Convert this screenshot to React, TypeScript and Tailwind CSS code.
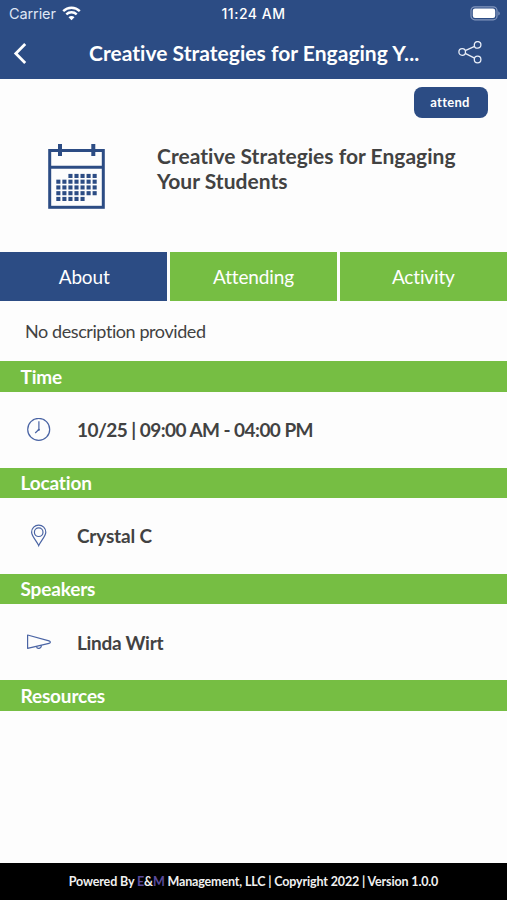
import React from "react";

const tabs = ["About", "Attending", "Activity"];

const calendarRows = [
  { from: 2, to: 6 },
  { from: 0, to: 6 },
  { from: 0, to: 6 },
  { from: 0, to: 6 },
  { from: 0, to: 4 },
];

const WifiIcon = () => (
  <svg width="19" height="15" viewBox="0 0 19 15" fill="none" stroke="white" strokeWidth="2.4">
    <path d="M1.2 5.2C5.8 .6 13.2 .6 17.8 5.2" />
    <path d="M4.3 8.4C7.2 5.6 11.8 5.6 14.7 8.4" />
    <path d="M9.5 14.2L6.5 11.2C8.1 9.6 10.9 9.6 12.5 11.2Z" fill="white" stroke="none" />
  </svg>
);

const BatteryIcon = () => (
  <svg width="31" height="15" viewBox="0 0 31 15" fill="none">
    <rect x="1" y=".8" width="26" height="13" rx="3.8" stroke="#8296bd" strokeWidth="1.2" />
    <rect x="2.8" y="2.6" width="22.4" height="9.4" rx="2.2" fill="white" />
    <path d="M28.3 5.2V9.6C30.3 8.6 30.3 6.2 28.3 5.2Z" fill="#8296bd" />
  </svg>
);

const ShareIcon = () => (
  <svg width="24" height="23" viewBox="0 0 24 23" fill="none" stroke="#e9eef8" strokeWidth="1.3">
    <circle cx="4.2" cy="11" r="3.3" />
    <circle cx="19.6" cy="3.9" r="3.3" />
    <circle cx="19.6" cy="18.5" r="3.3" />
    <path d="M7.2 9.6L16.6 5.3M7.2 12.4L16.6 17.1" />
  </svg>
);

const CalendarIcon = () => (
  <svg width="57" height="65" viewBox="0 0 57 65" fill="none" stroke="#2c4c84" strokeWidth="3">
    <rect x="1.7" y="6.5" width="53.6" height="56.8" />
    <path d="M1.7 23.2H55.3" />
    <path d="M12 0V12M45.3 0V12" strokeWidth="4" />
    {calendarRows.map((row, y) =>
      Array.from({ length: row.to - row.from + 1 }, (_, i) => (
        <rect
          key={y + "-" + i}
          x={8.3 + (row.from + i) * 6.05}
          y={29.9 + y * 5.75}
          width="4.1"
          height="4.1"
          fill="#2c4c84"
          stroke="none"
        />
      ))
    )}
  </svg>
);

const ClockIcon = () => (
  <svg width="24" height="24" viewBox="0 0 24 24" fill="none" stroke="#4a64a4" strokeWidth="1.2">
    <circle cx="11.7" cy="11.4" r="11" />
    <path d="M11.9 3.2V11.4L8.2 15" />
    <circle cx="11.8" cy="11.8" r="1.1" fill="#4a64a4" stroke="none" />
  </svg>
);

const PinIcon = () => (
  <svg width="24" height="24" viewBox="0 0 24 24" fill="none" stroke="#4a64a4" strokeWidth="1.2">
    <path d="M11.7 21.6C10.1 17.6 4.6 12.1 4.6 8.2A7.1 7.1 0 0 1 18.8 8.2C18.8 12.1 13.3 17.6 11.7 21.6Z" />
    <circle cx="11.7" cy="8.2" r="4.3" />
  </svg>
);

const SpeakerIcon = () => (
  <svg width="24" height="24" viewBox="0 0 24 24" fill="none" stroke="#4a64a4" strokeWidth="1.2" strokeLinejoin="round">
    <path d="M.6 5L22 10.9C23.8 11.4 23.8 12.9 22 13.3L.6 18.3Z" />
    <path d="M9.4 16.3C10.1 19.4 14.3 18.9 14.4 15.2" />
  </svg>
);

const sections = [
  { title: "Time", text: "10/25 | 09:00 AM - 04:00 PM", icon: <ClockIcon />, tracking: "tracking-[-0.55px]" },
  { title: "Location", text: "Crystal C", icon: <PinIcon />, tracking: "tracking-[-0.18px]" },
  { title: "Speakers", text: "Linda Wirt", icon: <SpeakerIcon />, tracking: "tracking-[-0.3px]" },
  { title: "Resources" },
];

const App = () => {
  return (
    <div className="flex h-[900px] w-[507px] flex-col overflow-hidden bg-[#fdfdfd] font-['Lato',sans-serif] text-[#424242] [font-variant-ligatures:none]">
      <header className="h-[79px] shrink-0 bg-[#2c4c84] text-white">
        <div className="grid h-[27px] grid-cols-3 items-center pl-[9px] pr-[6px] font-['Inter',sans-serif]">
          <div className="flex items-center gap-1.5 text-[14.5px] text-[#dfe6f4]">
            <span className="w-[47px] tracking-[-0.1px]">Carrier</span>
            <WifiIcon />
          </div>
          <p className="-ml-[3px] text-center text-[14px] font-medium tracking-[0.5px]">11:24 AM</p>
          <div className="flex justify-end">
            <BatteryIcon />
          </div>
        </div>
        <div className="flex h-[51px] items-center">
          <svg className="ml-[13px] shrink-0" width="14" height="22" viewBox="0 0 14 22" fill="none" stroke="white" strokeWidth="2.8">
            <path d="M12.2 2L2.8 11.5L12.2 21" />
          </svg>
          <h1 className="ml-[62px] w-[331px] whitespace-nowrap text-[21px] font-bold tracking-[0.03px]">Creative Strategies for Engaging Y...</h1>
          <div className="ml-[38px]">
            <ShareIcon />
          </div>
        </div>
      </header>

      <div className="h-[173px] shrink-0 pt-2">
        <div className="flex justify-end pr-[19px]">
          <button className="h-[31px] w-[74px] rounded-[8px] bg-[#2c4c84] pr-0.5 text-[13px] font-bold tracking-[0.25px] text-white">attend</button>
        </div>
        <div className="flex pl-12 pt-[26px]">
          <CalendarIcon />
          <h2 className="-mt-px ml-[52px] w-[320px] text-[21px] font-bold leading-[25px] tracking-[0.02px]">
            Creative Strategies for Engaging Your Students
          </h2>
        </div>
      </div>

      <nav className="mt-[0.4px] grid h-[48.6px] shrink-0 grid-cols-3 gap-[2.5px] text-[19px] tracking-[-0.15px] text-white">
        {tabs.map((tab) => (
          <button key={tab} className={tab === "About" ? "bg-[#2c4c84] pt-0.5 pl-px" : "bg-[#76be43] pt-0.5"}>
            {tab}
          </button>
        ))}
      </nav>
      <p className="flex h-[60.4px] shrink-0 items-center pl-[25px] pt-px text-[18px] tracking-[-0.42px]">No description provided</p>

      {sections.map((section) => (
        <section key={section.title} className="shrink-0">
          <h3 className="flex h-[30.3px] items-center bg-[#76be43] pl-[20.5px] pt-px text-[19px] font-bold tracking-[-0.16px] text-white">{section.title}</h3>
          {section.text && (
            <div className="flex h-[76px] items-center pl-[27px]">
              {section.icon}
              <p className={"ml-[26px] pt-px text-[19px] font-bold " + section.tracking}>{section.text}</p>
            </div>
          )}
        </section>
      ))}

      <footer className="mt-auto flex h-[37px] shrink-0 items-center justify-center bg-black pt-[2px] text-[12.5px] font-bold tracking-[-0.15px] text-[#f0f0f0]">
        <p className="whitespace-nowrap">
          Powered By <span className="text-[#5a4a9c]">E</span>&amp;<span className="text-[#5a4a9c]">M</span> Management, LLC | Copyright 2022 | Version 1.0.0
        </p>
      </footer>
    </div>
  );
};

export default App;
